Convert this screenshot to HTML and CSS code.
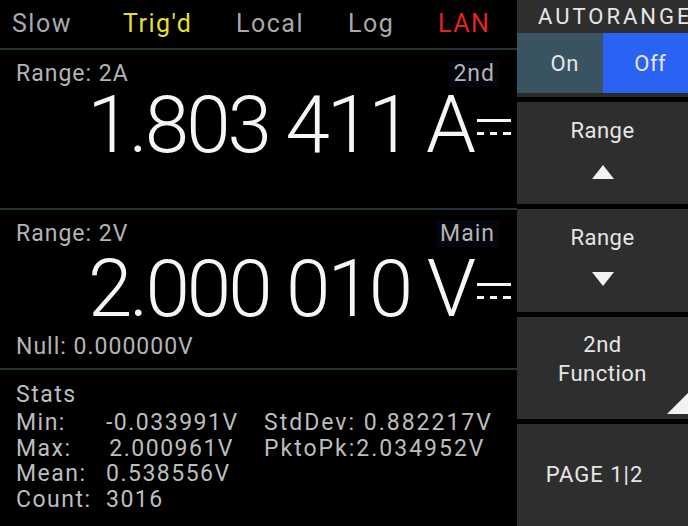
FILE: index.html
```html
<!DOCTYPE html>
<html lang="en">
  <head>
    <meta charset="UTF-8" />
    <meta name="viewport" content="width=device-width, initial-scale=1.0" />
    <title>Multimeter Display</title>
    <link rel="stylesheet" href="styles.css">
  </head>
  <body>
    <div class="screen">
      <!-- Measurement area -->
      <div class="main">
        <div class="status-bar">
          <span class="status">Slow</span>
          <span class="status status-trig">Trig'd</span>
          <span class="status">Local</span>
          <span class="status">Log</span>
          <span class="status status-lan">LAN</span>
        </div>

        <div class="panel panel-primary">
          <div class="panel-head">
            <span class="label">Range: 2A</span>
            <span class="tag">2nd</span>
          </div>
          <div class="reading">
            <span class="reading-value">1.803 411 A</span>
            <svg class="dc-icon" width="36" height="20" viewBox="0 0 36 20">
              <rect x="0" y="1" width="34" height="3" fill="#f4f8f4" />
              <rect x="0" y="14" width="7" height="3" fill="#f4f8f4" />
              <rect x="13" y="14" width="7" height="3" fill="#f4f8f4" />
              <rect x="26" y="14" width="8" height="3" fill="#f4f8f4" />
            </svg>
          </div>
        </div>

        <div class="panel panel-secondary">
          <div class="panel-head">
            <span class="label">Range: 2V</span>
            <span class="tag">Main</span>
          </div>
          <div class="reading">
            <span class="reading-value">2.000 010 V</span>
            <svg class="dc-icon" width="36" height="20" viewBox="0 0 36 20">
              <rect x="0" y="1" width="34" height="3" fill="#f4f8f4" />
              <rect x="0" y="14" width="7" height="3" fill="#f4f8f4" />
              <rect x="13" y="14" width="7" height="3" fill="#f4f8f4" />
              <rect x="26" y="14" width="8" height="3" fill="#f4f8f4" />
            </svg>
          </div>
          <div class="label null-line">Null: 0.000000V</div>
        </div>

        <div class="stats">
          <div class="stats-title">Stats</div>
          <div class="stats-grid">
            <span class="stat-name">Min:</span>
            <span class="stat-value">-0.033991V</span>
            <span class="stat-extra">StdDev: 0.882217V</span>
            <span class="stat-name">Max:</span>
            <span class="stat-value">2.000961V</span>
            <span class="stat-extra">PktoPk:2.034952V</span>
            <span class="stat-name">Mean:</span>
            <span class="stat-value stat-left">0.538556V</span>
            <span></span>
            <span class="stat-name">Count:</span>
            <span class="stat-value stat-left">3016</span>
            <span></span>
          </div>
        </div>
      </div>

      <!-- Soft keys -->
      <div class="softkeys">
        <div class="autorange">
          <div class="autorange-title">AUTORANGE</div>
          <div class="toggle">
            <span class="toggle-option">On</span>
            <span class="toggle-option toggle-active">Off</span>
          </div>
        </div>
        <div class="softkey">
          <span>Range</span>
          <svg class="arrow" width="22" height="14" viewBox="0 0 22 14">
            <polygon points="11,0 22,14 0,14" fill="#f2f2f2" />
          </svg>
        </div>
        <div class="softkey">
          <span>Range</span>
          <svg class="arrow" width="22" height="14" viewBox="0 0 22 14">
            <polygon points="0,0 22,0 11,14" fill="#f2f2f2" />
          </svg>
        </div>
        <div class="softkey softkey-menu">
          <span>2nd</span>
          <span class="menu-name">Function</span>
          <svg class="corner" width="21" height="21" viewBox="0 0 21 21">
            <polygon points="21,0 21,21 0,21" fill="#f2f2f2" />
          </svg>
        </div>
        <div class="softkey">
          <span class="page">PAGE 1|2</span>
        </div>
      </div>
    </div>
  </body>
</html>
```

FILE: styles.css
```css
/* Reset and base styles */
* {
  margin: 0;
  padding: 0;
  box-sizing: border-box;
}

body {
  background-color: #000;
  font-family: Roboto, "DejaVu Sans", sans-serif;
  overflow: hidden;
}

.screen {
  display: flex;
  width: 688px;
  height: 526px;
}

/* Measurement area */
.main {
  width: 517px;
  display: flex;
  flex-direction: column;
  background-color: #000;
}

.status-bar {
  flex-shrink: 0;
  height: 50px;
  display: grid;
  grid-template-columns: 111px 113px 112px 90px auto;
  align-items: center;
  padding-left: 12px;
  padding-bottom: 2px;
  border-bottom: 2px solid #25353b;
}

.status {
  font-size: 25px;
  letter-spacing: 1.5px;
  color: #a9a9a9;
}

.status-trig {
  color: #e6df2c;
}

.status-lan {
  color: #e2261c;
}

.panel {
  flex-shrink: 0;
  height: 160px;
  padding: 10px 22px 0 16px;
  border-bottom: 2px solid #25353b;
}

.panel-head {
  display: flex;
  justify-content: space-between;
  align-items: center;
}

.label {
  font-size: 23px;
  letter-spacing: 1px;
  color: #b4b4b4;
}

.tag {
  font-size: 23px;
  letter-spacing: 1px;
  color: #b4b4b4;
  background-color: #05050d;
  padding: 0 4px;
  margin-right: -4px;
}

.reading {
  display: flex;
  justify-content: flex-end;
  align-items: center;
  margin-right: -18px;
  margin-top: -4px;
  height: 84px;
}

.panel-secondary .reading {
  margin-top: 0;
}

.reading-value {
  font-size: 80px;
  font-weight: 300;
  letter-spacing: -3px;
  color: #f4f8f4;
  line-height: 0.8;
}

.dc-icon {
  margin-left: 4px;
  margin-top: 6px;
}

.null-line {
  margin-top: 2px;
}

/* Stats */
.stats {
  flex: 1;
  padding: 9px 16px 0;
  color: #bdbdbd;
  font-size: 23px;
  letter-spacing: 1.5px;
  white-space: nowrap;
}

.stats-title {
  line-height: 31px;
}

.stats-grid {
  display: grid;
  grid-template-columns: 90px 128px auto;
  line-height: 25.5px;
}

.stat-value {
  text-align: right;
}

.stat-left {
  text-align: left;
}

.stat-extra {
  margin-left: 30px;
  letter-spacing: 2px;
}

/* Soft keys */
.softkeys {
  width: 171px;
  display: flex;
  flex-direction: column;
  gap: 5px;
  color: #e6e6e6;
  font-size: 22px;
  letter-spacing: 0.5px;
}

.autorange {
  height: 97px;
  background-color: #2a2a2a;
  padding-bottom: 4px;
}

.autorange-title {
  height: 33px;
  background-color: #2e2e2e;
  padding-left: 21px;
  line-height: 34px;
  letter-spacing: 3px;
  white-space: nowrap;
  overflow: hidden;
}

.toggle {
  display: flex;
  height: 60px;
}

.toggle-option {
  flex: 1;
  display: flex;
  align-items: center;
  justify-content: center;
  padding-left: 10px;
  background-color: #3a5360;
}

.toggle-active {
  background-color: #2a62f4;
}

.softkey {
  flex: 1 1 0;
  position: relative;
  background-color: #2e2e2e;
  display: flex;
  flex-direction: column;
  align-items: center;
  justify-content: center;
  gap: 22px;
}

.arrow {
  margin-bottom: 10px;
}

.softkey-menu {
  gap: 4px;
}

.menu-name {
  margin-bottom: 18px;
}

.corner {
  position: absolute;
  right: 0;
  bottom: 5px;
}

.page {
  letter-spacing: 1px;
  margin-right: 16px;
}
```
